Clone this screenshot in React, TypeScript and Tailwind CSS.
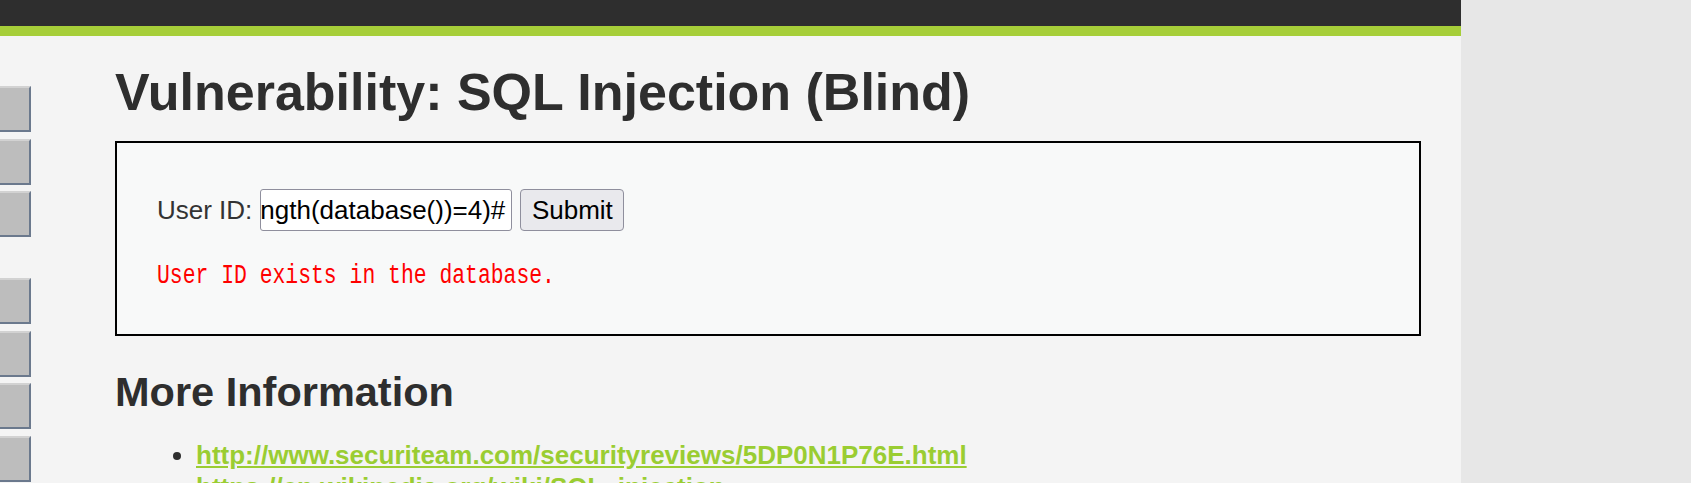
const sans = "font-['Liberation_Sans',Arial,sans-serif]";

const MenuButton = () => (
  <div className="h-[46px] w-[31px] bg-[#bdbdbd] border-t-2 border-r-2 border-b-2 border-t-[#d2d2d2] border-r-[#6b798d] border-b-[#6b798d]"></div>
);

const App = () => {
  return (
    <div className={`h-[483px] w-[1691px] overflow-hidden bg-[#e7e7e7] ${sans}`}>
      <div className="w-[1461px] h-full bg-[#f4f4f4]">
        {/* Header */}
        <div className="h-[26px] bg-[#2e2e2e]"></div>
        <div className="h-[10px] bg-[#a6ce39]"></div>

        <div className="flex">
          {/* Side menu */}
          <div className="flex flex-col pt-[50px]">
            <div className="flex flex-col gap-[6.5px]">
              <MenuButton />
              <MenuButton />
              <MenuButton />
            </div>
            <div className="flex flex-col gap-[6.5px] mt-[41px]">
              <MenuButton />
              <MenuButton />
              <MenuButton />
              <MenuButton />
            </div>
          </div>

          {/* Body */}
          <div className="ml-[84px] w-[1306px] text-[#2e2e2e]">
            <h1 className="mt-[26px] text-[52px] leading-[60px] font-bold">
              Vulnerability: SQL Injection (Blind)
            </h1>

            <div className="mt-[19px] border-2 border-black bg-[#f8f9f9] pl-[40px] pt-[46px] pb-[43px]">
              <form className="flex items-center h-[42px] text-[26px]" onSubmit={(e) => e.preventDefault()}>
                <span className="text-[#333]">User ID:</span>
                <div className="ml-[8px] h-[42px] w-[252px] flex items-center justify-end overflow-hidden whitespace-nowrap rounded-[3px] border border-[#8f8f9d] bg-white pr-[6px] text-black">
                  <span>1' and (length(database())=4)#</span>
                </div>
                <button
                  type="submit"
                  className="ml-[8px] h-[42px] w-[104px] rounded-[4px] border border-[#8f8f9d] bg-[#e9e9ed] text-black"
                >
                  Submit
                </button>
              </form>
              <pre className="mt-[36px] h-[24px] leading-[24px] text-[21.4px] text-[#ff0000] font-['Liberation_Mono','Courier_New',monospace]">
                <span className="inline-block origin-bottom-left scale-y-[1.3]">User ID exists in the database.</span>
              </pre>
            </div>

            <h2 className="mt-[32px] text-[41.5px] leading-[47px] font-bold">More Information</h2>
            <ul className="mt-[24px] list-disc pl-[81px] text-[26px] leading-[32px] marker:text-[#2e2e2e]">
              <li>
                <a href="#" className="font-bold text-[#9acd32] underline">
                  http://www.securiteam.com/securityreviews/5DP0N1P76E.html
                </a>
              </li>
              <li>
                <a href="#" className="font-bold text-[#9acd32] underline">
                  https://en.wikipedia.org/wiki/SQL_injection
                </a>
              </li>
            </ul>
          </div>
        </div>
      </div>
    </div>
  );
};

export default App;
